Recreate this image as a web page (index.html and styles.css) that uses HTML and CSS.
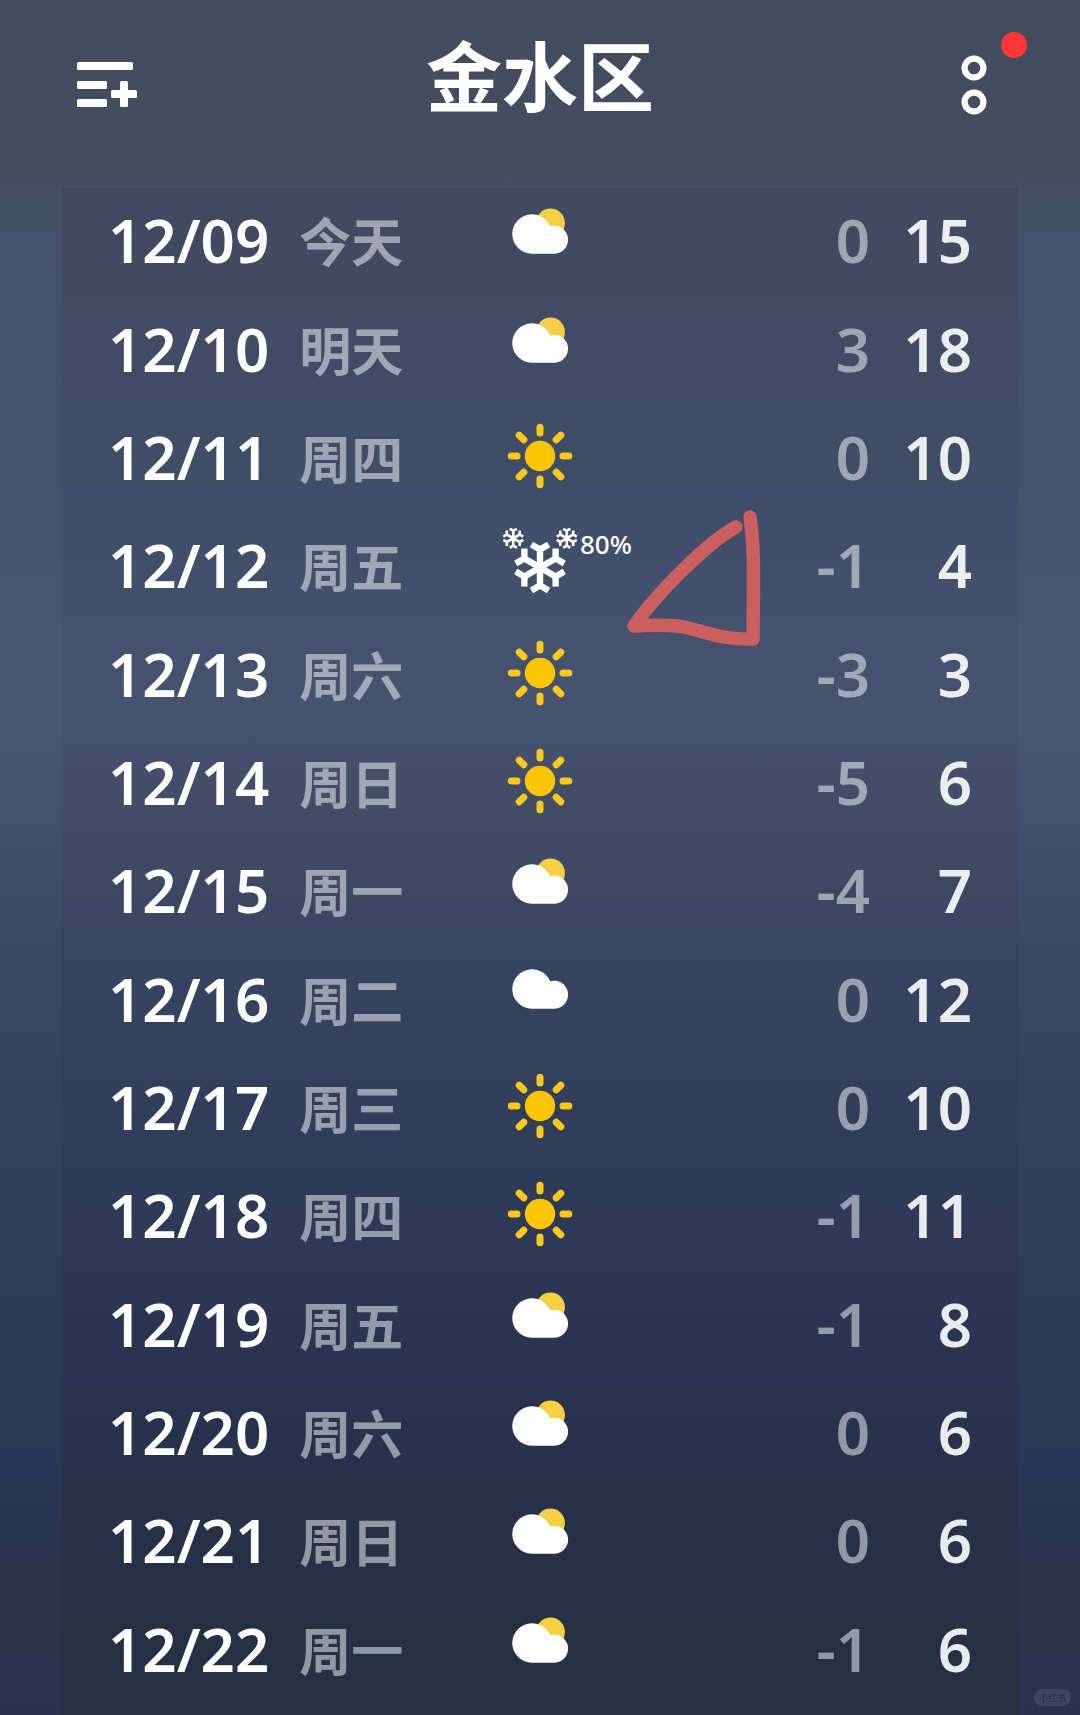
FILE: index.html
```
<!DOCTYPE html>
<html lang="zh-CN">
<head>
<meta charset="utf-8">
<meta name="viewport" content="width=device-width, initial-scale=1">
<title>金水区</title>
<link rel="stylesheet" href="styles.css">
</head>
<body>
<svg class="symbols" aria-hidden="true">
  <symbol id="cloud" viewBox="-40 -40 80 80">
    <path d="M-8.5 14.7a19.7 19.7 0 1 1 18.6-27.4a14 14 0 1 1 4.6 27.4z" fill="#fff"/>
  </symbol>
  <symbol id="partly" viewBox="-40 -40 80 80">
    <circle cx="10.5" cy="-16" r="14.4" fill="#f7cf43"/>
    <path d="M-8.5 14.7a19.7 19.7 0 1 1 18.6-27.4a14 14 0 1 1 4.6 27.4z" fill="#fff"/>
  </symbol>
  <symbol id="sun" viewBox="-40 -40 80 80">
    <circle r="15.2" fill="#fec504"/>
    <path d="M0-28.8v5.8M0 28.8v-5.8M-28.8 0h5.8M28.8 0h-5.8M-20.8-20.8l4.6 4.6M20.8-20.8l-4.6 4.6M-20.8 20.8l4.6-4.6M20.8 20.8l-4.6-4.6" stroke="#fbc81c" stroke-width="7" stroke-linecap="round"/>
  </symbol>
  <symbol id="flake" viewBox="-26 -26 52 52">
    <g fill="none" stroke="#fff" stroke-width="6.4">
      <path id="arm" d="M0 0V-18.5M-8.6-23L0-18L8.6-23"/>
      <use href="#arm" transform="rotate(60)"/>
      <use href="#arm" transform="rotate(120)"/>
      <use href="#arm" transform="rotate(180)"/>
      <use href="#arm" transform="rotate(240)"/>
      <use href="#arm" transform="rotate(300)"/>
    </g>
  </symbol>
  <symbol id="snow" viewBox="-40 -40 80 80">
    <use href="#flake" x="-26" y="-22.5" width="52" height="52"/>
    <use href="#flake" x="-37.5" y="-36.5" width="21.5" height="21.5"/>
    <use href="#flake" x="16" y="-36.5" width="21.5" height="21.5"/>
  </symbol>
</svg>

<header class="topbar">
  <button class="icon-button" type="button" aria-label="城市列表">
    <svg width="62" height="48" viewBox="0 0 62 48" fill="#fff">
      <rect x="1" y="1" width="56" height="8" rx="1.5"/>
      <rect x="1" y="20" width="30" height="8" rx="1.5"/>
      <rect x="1" y="38" width="30" height="8" rx="1.5"/>
      <rect x="35" y="29" width="26" height="8" rx="1.5"/>
      <rect x="44" y="20" width="8" height="26" rx="1.5"/>
    </svg>
  </button>
  <h1 class="city">金水区</h1>
  <button class="icon-button icon-button-end" type="button" aria-label="更多">
    <svg width="26" height="60" viewBox="0 0 26 60" fill="none" stroke="#fff" stroke-width="6.2">
      <circle cx="13" cy="13" r="9.4"/>
      <circle cx="13" cy="47" r="9.4"/>
    </svg>
    <span class="unread"></span>
  </button>
</header>

<main class="forecast">
  <ol class="days">
    <li class="day"><div class="when"><time datetime="12-09">12/09</time><span class="weekday">今天</span></div><svg class="weather"><use href="#partly"/></svg><div class="temps"><span class="low">0</span><span class="high">15</span></div></li>
    <li class="day"><div class="when"><time datetime="12-10">12/10</time><span class="weekday">明天</span></div><svg class="weather"><use href="#partly"/></svg><div class="temps"><span class="low">3</span><span class="high">18</span></div></li>
    <li class="day"><div class="when"><time datetime="12-11">12/11</time><span class="weekday">周四</span></div><svg class="weather"><use href="#sun"/></svg><div class="temps"><span class="low">0</span><span class="high">10</span></div></li>
    <li class="day"><div class="when"><time datetime="12-12">12/12</time><span class="weekday">周五</span></div><svg class="weather"><use href="#snow"/></svg><div class="temps"><span class="chance">80%</span><span class="low">-1</span><span class="high">4</span></div>
      <svg class="mark" width="130" height="140" viewBox="0 0 130 140" fill="none" stroke="#cb5f60" stroke-width="13.4" stroke-linecap="round" stroke-linejoin="round" aria-hidden="true">
        <path d="M106 17C78 32 27 83 4 116Q40 114 54 117C76 122 93 130 123 129Q124 50 123 43Q123 30 120 7"/>
      </svg></li>
    <li class="day"><div class="when"><time datetime="12-13">12/13</time><span class="weekday">周六</span></div><svg class="weather"><use href="#sun"/></svg><div class="temps"><span class="low">-3</span><span class="high">3</span></div></li>
    <li class="day"><div class="when"><time datetime="12-14">12/14</time><span class="weekday">周日</span></div><svg class="weather"><use href="#sun"/></svg><div class="temps"><span class="low">-5</span><span class="high">6</span></div></li>
    <li class="day"><div class="when"><time datetime="12-15">12/15</time><span class="weekday">周一</span></div><svg class="weather"><use href="#partly"/></svg><div class="temps"><span class="low">-4</span><span class="high">7</span></div></li>
    <li class="day"><div class="when"><time datetime="12-16">12/16</time><span class="weekday">周二</span></div><svg class="weather cloudy"><use href="#cloud"/></svg><div class="temps"><span class="low">0</span><span class="high">12</span></div></li>
    <li class="day"><div class="when"><time datetime="12-17">12/17</time><span class="weekday">周三</span></div><svg class="weather"><use href="#sun"/></svg><div class="temps"><span class="low">0</span><span class="high">10</span></div></li>
    <li class="day"><div class="when"><time datetime="12-18">12/18</time><span class="weekday">周四</span></div><svg class="weather"><use href="#sun"/></svg><div class="temps"><span class="low">-1</span><span class="high">11</span></div></li>
    <li class="day"><div class="when"><time datetime="12-19">12/19</time><span class="weekday">周五</span></div><svg class="weather"><use href="#partly"/></svg><div class="temps"><span class="low">-1</span><span class="high">8</span></div></li>
    <li class="day"><div class="when"><time datetime="12-20">12/20</time><span class="weekday">周六</span></div><svg class="weather"><use href="#partly"/></svg><div class="temps"><span class="low">0</span><span class="high">6</span></div></li>
    <li class="day"><div class="when"><time datetime="12-21">12/21</time><span class="weekday">周日</span></div><svg class="weather"><use href="#partly"/></svg><div class="temps"><span class="low">0</span><span class="high">6</span></div></li>
    <li class="day"><div class="when"><time datetime="12-22">12/22</time><span class="weekday">周一</span></div><svg class="weather"><use href="#partly"/></svg><div class="temps"><span class="low">-1</span><span class="high">6</span></div></li>
  </ol>
</main>
<span class="watermark">小红书</span>
</body>
</html>
```
FILE: styles.css
```
* {
  box-sizing: border-box;
}

body {
  position: relative;
  display: flex;
  flex-direction: column;
  min-height: 100vh;
  margin: 0;
  color: #fff;
  font-family: "Noto Sans", "Noto Sans CJK SC", sans-serif;
  background: linear-gradient(#434b5e 0%, #434e60 8%, #43526a 14%, #44536c 28%, #495774 41%, #445270 47%, #3a4866 55%, #303f5c 69%, #2a3756 86%, #29354a 93%, #27334e 100%);
}

.symbols {
  position: absolute;
  width: 0;
  height: 0;
}

.topbar {
  display: grid;
  grid-template-columns: 1fr auto 1fr;
  align-items: center;
  height: 188px;
  padding: 0 76px 18px;
}

.icon-button {
  position: relative;
  display: flex;
  justify-self: start;
  padding: 0;
  border: 0;
  background: none;
}

.icon-button-end {
  justify-self: end;
  margin-right: 17px;
}

.unread {
  position: absolute;
  top: -23px;
  right: -40px;
  width: 26px;
  height: 26px;
  border-radius: 50%;
  background: #ff3636;
}

.city {
  margin: 0 0 24px;
  font-family: "Noto Sans CJK SC", sans-serif;
  font-size: 76px;
  line-height: 96px;
  font-weight: 700;
}

.forecast {
  display: flex;
  flex: 1;
  margin: 0 62px;
  padding-bottom: 10px;
  background: linear-gradient(#41495f 0%, #414b64 8%, #3f4e68 20%, #45536f 34%, #414b65 42%, #384561 50%, #2f3c59 64%, #29334f 78%, #263047 88%, #243043 100%);
}

.days {
  display: grid;
  flex: 1;
  grid-auto-rows: 1fr;
  margin: 0;
  padding: 0 46px;
  list-style: none;
}

.day {
  position: relative;
  display: grid;
  grid-template-columns: 1fr 80px 1fr;
  align-items: center;
  min-height: 100px;
  font-size: 60px;
  line-height: 72px;
  font-weight: 600;
}

.when,
.temps {
  display: flex;
  align-items: center;
  padding-bottom: 4px;
}

.when {
  gap: 30px;
}

.weekday {
  color: rgba(255, 255, 255, 0.5);
  font-family: "Noto Sans CJK SC", sans-serif;
  font-size: 52px;
  line-height: 68px;
}

.weather {
  width: 80px;
  height: 80px;
  margin-bottom: 6px;
}

.cloudy {
  margin-bottom: 14px;
}

.temps {
  justify-content: flex-end;
}

.chance {
  margin: 0 auto 42px 0;
  font-size: 26px;
  line-height: 32px;
  font-weight: 500;
}

.low {
  color: rgba(255, 255, 255, 0.5);
}

.high {
  width: 102px;
  color: rgba(255, 255, 255, 0.9);
  text-align: right;
}

.mark {
  position: absolute;
  top: -3px;
  left: 522px;
  overflow: visible;
}

.watermark {
  position: absolute;
  right: 9px;
  bottom: 9px;
  padding: 0 5px;
  border-radius: 9px;
  color: #222d45;
  background: #3b4760;
  font-size: 9px;
  line-height: 17px;
}
```
